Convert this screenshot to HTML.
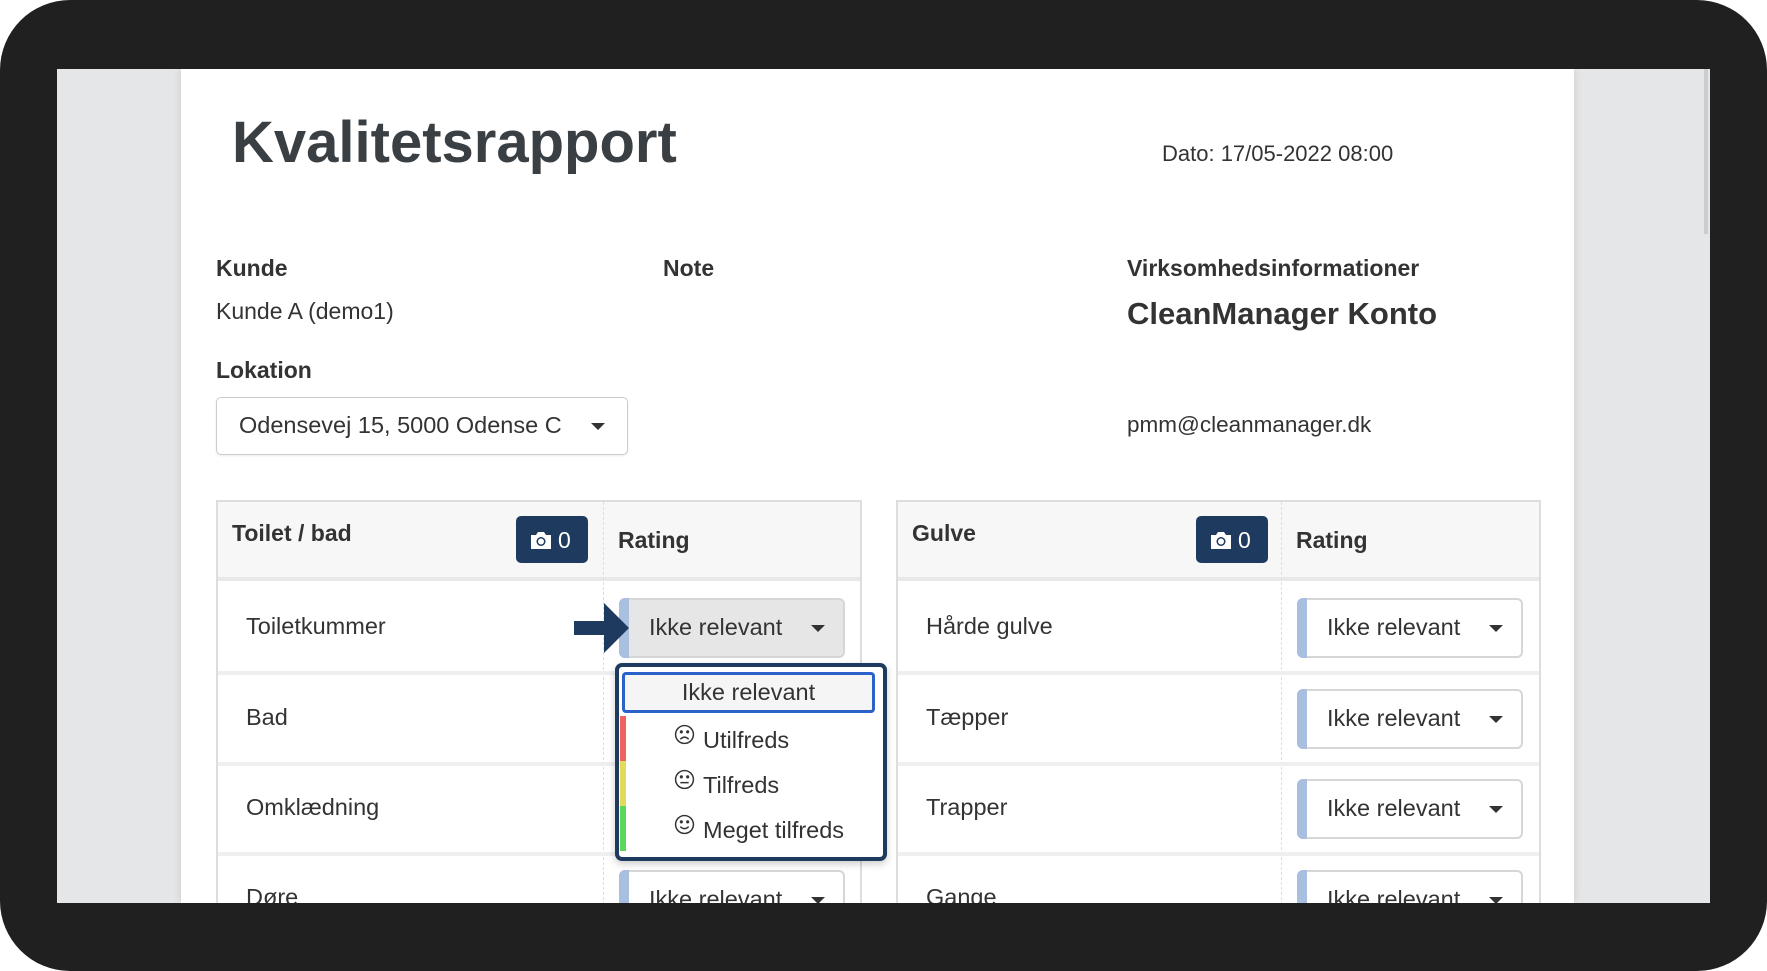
<!DOCTYPE html>
<html><head><meta charset="utf-8"><style>
*{margin:0;padding:0;box-sizing:border-box}
body{width:1767px;height:971px;background:#fff;position:relative;overflow:hidden;font-family:"Liberation Sans",sans-serif;color:#333}
.frame{position:absolute;left:0;top:0;width:1767px;height:971px;background:#212021;border-radius:70px}
.screen{position:absolute;left:57px;top:69px;width:1653px;height:834px;background:#e5e6e7;overflow:hidden}
.page{position:absolute;left:124px;top:0;width:1393px;height:834px;background:#fff;box-shadow:0 0 8px rgba(0,0,0,.12)}
.a{position:absolute;white-space:nowrap}
.b{font-weight:bold;color:#333}
.tbl{position:absolute;top:431px;height:420px;border:2px solid #ddd;border-bottom:none}
.hdr{position:absolute;left:0;top:0;right:0;height:79px;background:#f7f7f7;border-bottom:4px solid #e8e8e8}
.vd{position:absolute;top:0;bottom:0;border-left:1px dashed #ddd}
.row{position:absolute;left:0;right:0;height:4px;background:#efefef}
.cam{position:absolute;top:14px;width:72px;height:47px;background:#1f3a5f;border-radius:5px;color:#fff;font-size:23px}
.sel{position:absolute;width:226px;height:60px;border:2px solid #d6d6d6;border-radius:6px;background:#fff;font-size:23.5px;color:#333}
.sel::before{content:"";position:absolute;left:-2px;top:-2px;bottom:-2px;width:10px;background:#a9bfe0;border-radius:6px 0 0 6px}
.sel span{position:absolute;left:28px;top:14px}
.sel i{position:absolute;left:190px;top:25px;border-left:7px solid transparent;border-right:7px solid transparent;border-top:7px solid #333}
.t{font-size:23.5px;color:#333}
</style></head><body>
<div class="frame"></div>
<div class="screen">
<div style="position:absolute;right:2px;top:0;width:4px;height:165px;background:#ccc"></div>
<div class="page">
<div class="a b" style="left:51px;top:40px;font-size:58px;color:#3a3f44">Kvalitetsrapport</div>
<div class="a" style="left:981px;top:72px;font-size:22px">Dato: 17/05-2022 08:00</div>
<div class="a b" style="left:35px;top:186px;font-size:23px">Kunde</div>
<div class="a" style="left:35px;top:229px;font-size:23px">Kunde A (demo1)</div>
<div class="a b" style="left:482px;top:186px;font-size:23px">Note</div>
<div class="a b" style="left:946px;top:186px;font-size:23px">Virksomhedsinformationer</div>
<div class="a b" style="left:946px;top:227px;font-size:31px">CleanManager Konto</div>
<div class="a b" style="left:35px;top:288px;font-size:23px">Lokation</div>
<div class="a" style="left:35px;top:328px;width:412px;height:58px;border:1px solid #ccc;border-radius:5px;box-shadow:0 1px 2px rgba(0,0,0,.08)">
 <span class="a" style="left:22px;top:14px;font-size:23.5px">Odensevej 15, 5000 Odense C</span>
 <i class="a" style="left:374px;top:25px;border-left:7px solid transparent;border-right:7px solid transparent;border-top:7px solid #333"></i></div>
<div class="a" style="left:946px;top:343px;font-size:22.5px">pmm@cleanmanager.dk</div>

<!-- table 1 -->
<div class="tbl" style="left:35px;width:646px">
 <div class="hdr"></div>
 <div class="vd" style="left:385px"></div>
 <div class="a b" style="left:14px;top:18px;font-size:23px">Toilet / bad</div>
 <div class="cam" style="left:298px"><svg class="a" style="left:13px;top:14px" width="24" height="20" viewBox="0 0 24 20"><path d="M2 5h5l2-3h6l2 3h5v14H2z" fill="#fff"/><circle cx="12" cy="11.5" r="4.5" fill="#1f3a5f"/><circle cx="12" cy="11.5" r="3" fill="#fff"/></svg><span class="a" style="left:42px;top:11px">0</span></div>
 <div class="a b" style="left:400px;top:25px;font-size:23px">Rating</div>
 <div class="row" style="top:169px"></div><div class="row" style="top:260px"></div><div class="row" style="top:350px"></div>
 <div class="a t" style="left:28px;top:111px">Toiletkummer</div>
 <div class="a t" style="left:28px;top:202px">Bad</div>
 <div class="a t" style="left:28px;top:292px">Omklædning</div>
 <div class="a t" style="left:28px;top:382px">Døre</div>
 <div class="sel" style="left:401px;top:96px;background:#e6e6e6"><span>Ikke relevant</span><i></i></div>
 <div class="sel" style="left:401px;top:368px"><span>Ikke relevant</span><i></i></div>
 <svg class="a" style="left:356px;top:101px" width="56" height="50" viewBox="0 0 56 50"><path d="M0 18h30V0l25 25-25 25V32H0z" fill="#1f3a5f"/></svg>
</div>

<!-- table 2 -->
<div class="tbl" style="left:715px;width:645px">
 <div class="hdr"></div>
 <div class="vd" style="left:383px"></div>
 <div class="a b" style="left:14px;top:18px;font-size:23px">Gulve</div>
 <div class="cam" style="left:298px"><svg class="a" style="left:13px;top:14px" width="24" height="20" viewBox="0 0 24 20"><path d="M2 5h5l2-3h6l2 3h5v14H2z" fill="#fff"/><circle cx="12" cy="11.5" r="4.5" fill="#1f3a5f"/><circle cx="12" cy="11.5" r="3" fill="#fff"/></svg><span class="a" style="left:42px;top:11px">0</span></div>
 <div class="a b" style="left:398px;top:25px;font-size:23px">Rating</div>
 <div class="row" style="top:169px"></div><div class="row" style="top:260px"></div><div class="row" style="top:350px"></div>
 <div class="a t" style="left:28px;top:111px">Hårde gulve</div>
 <div class="a t" style="left:28px;top:202px">Tæpper</div>
 <div class="a t" style="left:28px;top:292px">Trapper</div>
 <div class="a t" style="left:28px;top:382px">Gange</div>
 <div class="sel" style="left:399px;top:96px"><span>Ikke relevant</span><i></i></div>
 <div class="sel" style="left:399px;top:187px"><span>Ikke relevant</span><i></i></div>
 <div class="sel" style="left:399px;top:277px"><span>Ikke relevant</span><i></i></div>
 <div class="sel" style="left:399px;top:368px"><span>Ikke relevant</span><i></i></div>
</div>

<!-- dropdown -->
<div class="a" style="left:434px;top:594px;width:272px;height:198px;border:4px solid #1f3a5f;border-radius:7px;background:#fff;box-shadow:0 3px 8px rgba(0,0,0,.2)">
 <div class="a" style="left:3px;top:5px;width:253px;height:41px;border:3px solid #2a62c9;border-radius:4px;background:#f5f5f5;text-align:center;font-size:23.5px;line-height:35px">Ikke relevant</div>
 <div class="a" style="left:1px;top:49px;width:6px;height:45px;background:#f06262"></div>
 <div class="a" style="left:1px;top:94px;width:6px;height:45px;background:#e0dc5a"></div>
 <div class="a" style="left:1px;top:139px;width:6px;height:45px;background:#5cd65c"></div>
 <svg class="a" style="left:55px;top:57px" width="21" height="21" viewBox="0 0 20 20" fill="none" stroke="#333" stroke-width="1.4"><circle cx="10" cy="10" r="8.5"/><circle cx="7" cy="7.5" r=".8" fill="#333"/><circle cx="13" cy="7.5" r=".8" fill="#333"/><path d="M6 14.5q4-4 8 0"/></svg>
 <svg class="a" style="left:55px;top:102px" width="21" height="21" viewBox="0 0 20 20" fill="none" stroke="#333" stroke-width="1.4"><circle cx="10" cy="10" r="8.5"/><circle cx="7" cy="7.5" r=".8" fill="#333"/><circle cx="13" cy="7.5" r=".8" fill="#333"/><path d="M6 13h8"/></svg>
 <svg class="a" style="left:55px;top:147px" width="21" height="21" viewBox="0 0 20 20" fill="none" stroke="#333" stroke-width="1.4"><circle cx="10" cy="10" r="8.5"/><circle cx="7" cy="7.5" r=".8" fill="#333"/><circle cx="13" cy="7.5" r=".8" fill="#333"/><path d="M6 12q4 4 8 0"/></svg>
 <div class="a t" style="left:84px;top:60px">Utilfreds</div>
 <div class="a t" style="left:84px;top:105px">Tilfreds</div>
 <div class="a t" style="left:84px;top:150px">Meget tilfreds</div>
</div>
</div>
</div>
</body></html>
